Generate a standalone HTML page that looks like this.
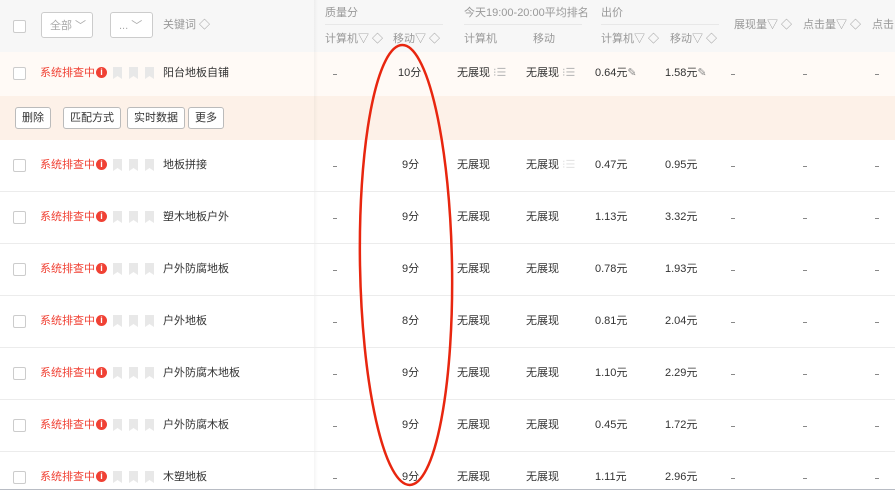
<!DOCTYPE html><html><head><meta charset="utf-8"><style>
html,body{margin:0;width:895px;height:494px;overflow:hidden}
body{background:#fff;font-family:"Liberation Sans","Noto Sans CJK SC",sans-serif;font-size:11px;color:#333;position:relative;line-height:16px}
.a{position:absolute;white-space:nowrap}
.g{color:#999}
.cb{position:absolute;left:13px;width:11px;height:11px;border:1px solid #ccc;border-radius:2px;background:#fff}
.row{position:absolute;left:0;width:895px;height:52px;border-bottom:1px solid #ececec;box-sizing:border-box}
.red{color:#f04134}
.info{display:inline-block;width:11px;height:11px;border-radius:50%;background:#f04134;color:#fff;font-size:9px;line-height:11px;text-align:center;font-weight:bold;vertical-align:top;margin-top:2px;margin-left:1px}
.bk{position:absolute;width:9px;height:12px;background:#e8e8e8;clip-path:polygon(0 0,100% 0,100% 100%,50% 75%,0 100%)}
.btn{position:absolute;top:107px;height:20px;border:1px solid #bbb;border-radius:3px;background:#fff;line-height:20px;padding:0 6px;font-size:11px}
.sel{position:absolute;top:12px;height:26px;border:1px solid #ccc;border-radius:3px;background:#fff;color:#aaa;line-height:26px;padding-left:8px;box-sizing:border-box}
.dash{position:absolute;width:4px;height:1px;background:#888}
</style></head><body>
<div class="a" style="left:0;top:0;width:895px;height:52px;background:#f7f7f7"></div>
<div class="a" style="left:0;top:52px;width:895px;height:44px;background:#fffaf6"></div>
<div class="a" style="left:0;top:96px;width:895px;height:44px;background:#fdf1e8"></div>
<div class="a" style="left:314px;top:0;width:4px;height:490px;background:linear-gradient(to right,rgba(0,0,0,0.04),rgba(0,0,0,0))"></div>
<div class="cb" style="top:20px"></div>
<div class="sel" style="left:41px;width:52px">全部 ﹀</div>
<div class="sel" style="left:110px;width:43px">...&nbsp;﹀</div>
<div class="a g" style="left:163px;top:17px">关键词 ◇</div>
<div class="a g" style="left:325px;top:5px">质量分</div>
<div class="a" style="left:325px;top:24px;width:118px;border-top:1px solid #e8e8e8"></div>
<div class="a g" style="left:325px;top:31px">计算机▽ ◇</div>
<div class="a g" style="left:393px;top:31px">移动▽ ◇</div>
<div class="a g" style="left:464px;top:5px">今天19:00-20:00平均排名</div>
<div class="a" style="left:464px;top:24px;width:118px;border-top:1px solid #e8e8e8"></div>
<div class="a g" style="left:464px;top:31px">计算机</div>
<div class="a g" style="left:533px;top:31px">移动</div>
<div class="a g" style="left:601px;top:5px">出价</div>
<div class="a" style="left:601px;top:24px;width:118px;border-top:1px solid #e8e8e8"></div>
<div class="a g" style="left:601px;top:31px">计算机▽ ◇</div>
<div class="a g" style="left:670px;top:31px">移动▽ ◇</div>
<div class="a g" style="left:734px;top:17px">展现量▽ ◇</div>
<div class="a g" style="left:803px;top:17px">点击量▽ ◇</div>
<div class="a g" style="left:872px;top:17px">点击</div>
<div class="btn" style="left:15px">删除</div>
<div class="btn" style="left:63px">匹配方式</div>
<div class="btn" style="left:127px">实时数据</div>
<div class="btn" style="left:188px">更多</div>
<div id="rows"></div>
<div class="a" style="left:0;top:489px;width:895px;border-top:1px solid #b8bcc4"></div>
<svg class="a" style="left:0;top:0" width="895" height="494"><ellipse cx="406" cy="265" rx="46" ry="220" transform="rotate(-1 406 265)" fill="none" stroke="#e8260f" stroke-width="2.5"/></svg>
<script>
var d=[[52,"阳台地板自铺","10分","0.64元","1.58元",1],[140,"地板拼接","9分","0.47元","0.95元",2],[192,"塑木地板户外","9分","1.13元","3.32元",0],[244,"户外防腐地板","9分","0.78元","1.93元",0],[296,"户外地板","8分","0.81元","2.04元",0],[348,"户外防腐木地板","9分","1.10元","2.29元",0],[400,"户外防腐木板","9分","0.45元","1.72元",0],[452,"木塑地板","9分","1.11元","2.96元",0]];
var h="";d.forEach(function(r){var t=r[0],h2=t==52?44:52,y=t+h2/2-9;
if(t!=52)h+='<div class="row" style="top:'+t+'px"></div>';
h+='<div class="cb" style="top:'+(t+h2/2-7)+'px"></div>';
h+='<div class="a red" style="left:40px;top:'+y+'px">系统排查中<span class="info">i</span></div>';
[113,129,145].forEach(function(x){h+='<div class="bk" style="left:'+x+'px;top:'+(y+2)+'px"></div>'});
h+='<div class="a" style="left:163px;top:'+y+'px">'+r[1]+'</div>';
var dy=y+9;
[333,731,803,875].forEach(function(x){h+='<div class="dash" style="left:'+x+'px;top:'+dy+'px"></div>'});
h+='<div class="a" style="left:'+(r[2].length>2?398:402)+'px;top:'+y+'px">'+r[2]+'</div>';
var ic=r[5]==1?'<span style="color:#bbb"> ⁝☰</span>':(r[5]==2?'<span style="color:#e4e4e4"> ⁝☰</span>':'');
h+='<div class="a" style="left:457px;top:'+y+'px">无展现'+(r[5]==1?ic:'')+'</div>';
h+='<div class="a" style="left:526px;top:'+y+'px">无展现'+ic+'</div>';
var pen=r[5]==1?'<span style="color:#888">✎</span>':'';
h+='<div class="a" style="left:595px;top:'+y+'px">'+r[3]+pen+'</div>';
h+='<div class="a" style="left:665px;top:'+y+'px">'+r[4]+pen+'</div>';
});document.getElementById("rows").innerHTML=h;
</script>
</body></html>
